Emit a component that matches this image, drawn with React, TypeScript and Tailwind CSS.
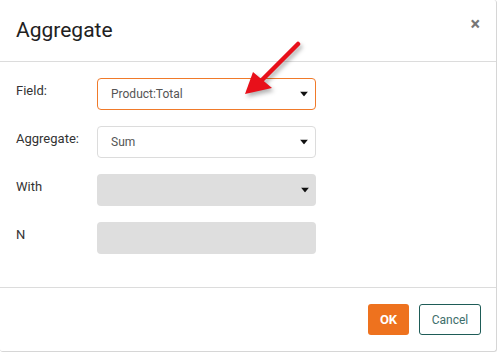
import React from "react";

const Caret = () => (
  <svg width="8" height="5" viewBox="0 0 8 5" className="absolute right-[7px] top-1/2 -translate-y-1/2">
    <path d="M0 0 H8 L4 5 Z" fill="#111" />
  </svg>
);

export default function App() {
  const font = { fontFamily: "Roboto, 'Liberation Sans', sans-serif" };
  return (
    <div className="w-[498px] h-[353px] bg-white relative" style={font}>
      <div className="w-[497px] h-[352px] bg-white rounded-[3px] border-b border-r border-[#d6d6d6] flex flex-col">
        <div className="h-[62px] shrink-0 flex items-center justify-between pl-4 pr-[16px] border-b border-[#dcdcdc]">
          <span className="text-[21px] text-[#212121] font-normal leading-none mt-[-1px]">Aggregate</span>
          <span className="text-[18px] text-[#777] leading-none mt-[-14px] font-bold">×</span>
        </div>
        <div className="flex flex-col gap-4 pt-[16px] pl-4 pb-[33px] border-b border-[#dcdcdc]">
          <div className="flex items-start">
            <span className="w-[81px] text-[13px] text-[#333] pt-[3px]">Field:</span>
            <div className="relative w-[219px] h-[32px] border border-[#f07a2a] rounded-[4px] flex items-center pl-[13px] text-[12px] text-[#555]">
              Product:Total
              <Caret />
            </div>
          </div>
          <div className="flex items-start">
            <span className="w-[81px] text-[13px] text-[#333] pt-[3px]">Aggregate:</span>
            <div className="relative w-[219px] h-[32px] border border-[#dcdcdc] rounded-[4px] flex items-center pl-[13px] text-[12px] text-[#555]">
              Sum
              <Caret />
            </div>
          </div>
          <div className="flex items-start">
            <span className="w-[81px] text-[13px] text-[#333] pt-[3px]">With</span>
            <div className="relative w-[219px] h-[32px] bg-[#dedede] rounded-[4px]">
              <Caret />
            </div>
          </div>
          <div className="flex items-start">
            <span className="w-[81px] text-[13px] text-[#333] pt-[3px]">N</span>
            <div className="w-[219px] h-[32px] bg-[#dedede] rounded-[4px]" />
          </div>
        </div>
        <div className="flex justify-end gap-[10px] pt-[16px] pr-[15px]">
          <button className="w-[41px] h-[31px] bg-[#ee721e] rounded-[3px] text-white text-[13px] font-bold">OK</button>
          <button className="w-[62px] h-[31px] border border-[#1e5c57] rounded-[3px] text-[#3d6e6a] text-[12px] bg-white">Cancel</button>
        </div>
      </div>
      <svg className="absolute left-0 top-0 pointer-events-none" width="498" height="353" style={{ filter: "drop-shadow(2px 3px 2px rgba(0,0,0,0.3))" }}>
        <line x1="298" y1="44" x2="262" y2="80" stroke="#e8101a" strokeWidth="4.5" strokeLinecap="round" />
        <path d="M245 94 L253 72 L272 88 Z" fill="#e8101a" />
      </svg>
    </div>
  );
}
